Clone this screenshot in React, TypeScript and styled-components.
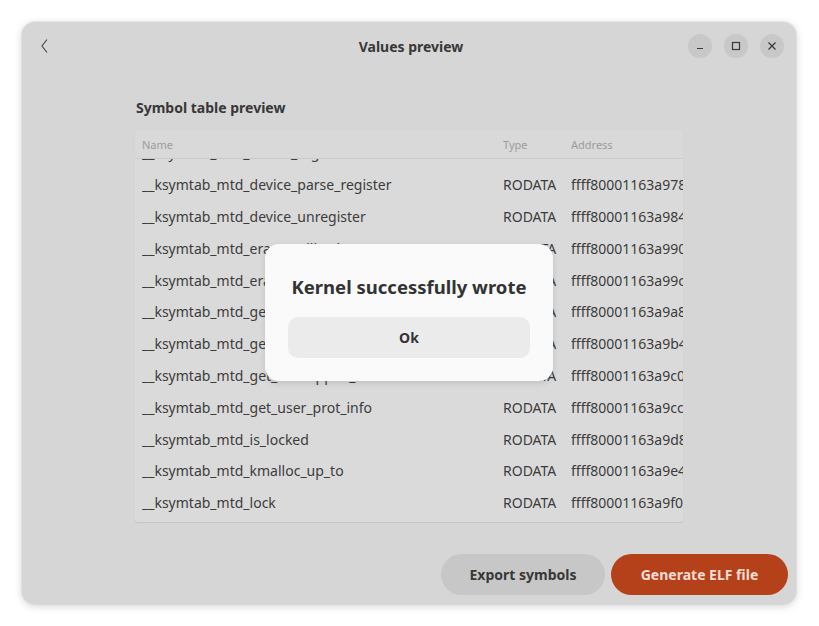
import React from "react";
import styled, { createGlobalStyle } from "styled-components";

const Global = createGlobalStyle`
  html, body { margin: 0; padding: 0; background: #ffffff; }
  body { font-family: "Noto Sans", "Open Sans", sans-serif; }
  * { box-sizing: border-box; }
`;

const Page = styled.div`
  width: 819px;
  height: 626px;
  padding: 22px 23px 22px 22px;
`;

const Window = styled.div`
  position: relative;
  width: 774px;
  height: 582px;
  background: #d6d6d6;
  border-radius: 13px;
  box-shadow: 0 2px 8px rgba(0,0,0,0.18), 0 0 0 1px rgba(0,0,0,0.05);
  display: flex;
  flex-direction: column;
  overflow: hidden;
`;

const HeaderBar = styled.div`
  height: 48px;
  display: grid;
  grid-template-columns: 1fr auto 1fr;
  align-items: center;
  padding: 0 12px 0 16px;
`;

const BackBtn = styled.div`
  justify-self: start;
  display: flex;
  align-items: center;
`;

const Title = styled.div`
  font-size: 14px;
  font-weight: 700;
  color: #383838;
`;

const Controls = styled.div`
  justify-self: end;
  display: flex;
  gap: 12px;
`;

const CtrlBtn = styled.div`
  width: 24px;
  height: 24px;
  border-radius: 50%;
  background: #c8c8c8;
  display: flex;
  align-items: center;
  justify-content: center;
`;

const Content = styled.div`
  flex: 1;
  display: flex;
  flex-direction: column;
  align-items: center;
  padding-top: 29px;
`;

const Section = styled.div`
  width: 548px;
`;

const SectionTitle = styled.div`
  font-size: 14px;
  font-weight: 700;
  color: #383838;
  padding-left: 1px;
  height: 18px;
  line-height: 18px;
`;

const Table = styled.div`
  margin-top: 13px;
  background: #dadada;
  border-radius: 3px;
  box-shadow: 0 1px 1px rgba(0,0,0,0.08);
  overflow: hidden;
`;

const Cols = "grid-template-columns: 361px 68px 112px;";

const HeadRow = styled.div`
  display: grid;
  ${Cols}
  height: 29px;
  align-items: center;
  padding-left: 7px;
  font-size: 11px;
  color: #9c9c9c;
  border-bottom: 1px solid #cacaca;
  background: #d9d9d9;
`;

const Body = styled.div`
  height: 363px;
  overflow: hidden;
`;

const Rows = styled.div`
  margin-top: -22px;
`;

const Row = styled.div`
  display: grid;
  ${Cols}
  height: 31.8px;
  align-items: center;
  padding-left: 7px;
  font-size: 14px;
  color: #3c3c3c;
  white-space: nowrap;
`;

const Cell = styled.div`
  overflow: hidden;
`;

const Footer = styled.div`
  display: flex;
  justify-content: flex-end;
  gap: 6px;
  padding: 0 8px 9px 0;
`;

const PillButton = styled.button<{ $primary?: boolean }>`
  height: 41px;
  border: none;
  border-radius: 21px;
  padding: 0;
  white-space: nowrap;
  font-family: "Noto Sans", "Open Sans", sans-serif;
  font-size: 14px;
  font-weight: 700;
  background: ${(p) => (p.$primary ? "#b5411a" : "#c7c7c7")};
  color: ${(p) => (p.$primary ? "#f4ddd4" : "#383838")};
  width: ${(p) => (p.$primary ? "177px" : "164px")};
`;

const Dialog = styled.div`
  position: absolute;
  left: 243px;
  top: 222px;
  width: 288px;
  height: 137px;
  background: #fafafa;
  border-radius: 14px;
  box-shadow: 0 2px 6px rgba(0,0,0,0.12);
  display: flex;
  flex-direction: column;
  align-items: center;
  padding: 31px 23px 0;
`;

const DialogTitle = styled.div`
  font-size: 18.5px;
  font-weight: 700;
  color: #333;
  line-height: 24px;
  white-space: nowrap;
`;

const DialogBtn = styled.div`
  margin-top: 18px;
  width: 100%;
  height: 41px;
  border-radius: 10px;
  background: #ebebeb;
  display: flex;
  align-items: center;
  justify-content: center;
  font-size: 14px;
  font-weight: 700;
  color: #333;
`;

const rows: [string, string][] = [
  ["__ksymtab_mtd_device_register", "ffff80001163a96c"],
  ["__ksymtab_mtd_device_parse_register", "ffff80001163a978"],
  ["__ksymtab_mtd_device_unregister", "ffff80001163a984"],
  ["__ksymtab_mtd_erase_callback", "ffff80001163a990"],
  ["__ksymtab_mtd_erase_user_prot_reg", "ffff80001163a99c"],
  ["__ksymtab_mtd_get_device", "ffff80001163a9a8"],
  ["__ksymtab_mtd_get_fact_prot_info", "ffff80001163a9b4"],
  ["__ksymtab_mtd_get_unmapped_area", "ffff80001163a9c0"],
  ["__ksymtab_mtd_get_user_prot_info", "ffff80001163a9cc"],
  ["__ksymtab_mtd_is_locked", "ffff80001163a9d8"],
  ["__ksymtab_mtd_kmalloc_up_to", "ffff80001163a9e4"],
  ["__ksymtab_mtd_lock", "ffff80001163a9f0"],
];

export default function App() {
  return (
    <Page>
      <Global />
      <Window>
        <HeaderBar>
          <BackBtn>
            <svg width="12" height="16" viewBox="0 0 12 16">
              <path d="M9 1.5 L4 8 L9 14.5" fill="none" stroke="#4a4a4a" strokeWidth="1.2" />
            </svg>
          </BackBtn>
          <Title>Values preview</Title>
          <Controls>
            <CtrlBtn>
              <svg width="10" height="10" viewBox="0 0 10 10">
                <path d="M2 7.5 H8" stroke="#3a3a3a" strokeWidth="1.2" />
              </svg>
            </CtrlBtn>
            <CtrlBtn>
              <svg width="10" height="10" viewBox="0 0 10 10">
                <rect x="1.5" y="1.5" width="7" height="7" fill="none" stroke="#3a3a3a" strokeWidth="1.2" />
              </svg>
            </CtrlBtn>
            <CtrlBtn>
              <svg width="10" height="10" viewBox="0 0 10 10">
                <path d="M1.5 1.5 L8.5 8.5 M8.5 1.5 L1.5 8.5" stroke="#3a3a3a" strokeWidth="1.3" />
              </svg>
            </CtrlBtn>
          </Controls>
        </HeaderBar>
        <Content>
          <Section>
            <SectionTitle>Symbol table preview</SectionTitle>
            <Table>
              <HeadRow>
                <Cell>Name</Cell>
                <Cell>Type</Cell>
                <Cell>Address</Cell>
              </HeadRow>
              <Body>
                <Rows>
                  {rows.map(([name, addr]) => (
                    <Row key={name}>
                      <Cell>{name}</Cell>
                      <Cell>RODATA</Cell>
                      <Cell>{addr}</Cell>
                    </Row>
                  ))}
                </Rows>
              </Body>
            </Table>
          </Section>
        </Content>
        <Footer>
          <PillButton>Export symbols</PillButton>
          <PillButton $primary>Generate ELF file</PillButton>
        </Footer>
        <Dialog>
          <DialogTitle>Kernel successfully wrote</DialogTitle>
          <DialogBtn>Ok</DialogBtn>
        </Dialog>
      </Window>
    </Page>
  );
}
